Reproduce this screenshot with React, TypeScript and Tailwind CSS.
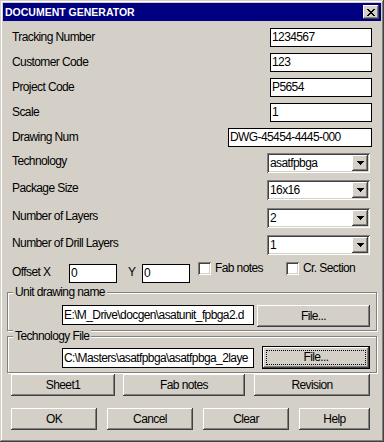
import React from "react";

const RAISED =
  "bg-[#d4d0c8] shadow-[inset_-1px_-1px_0_#404040,inset_1px_1px_0_#ffffff,inset_-2px_-2px_0_#808080,inset_2px_2px_0_#d4d0c8]";
const SUNKEN =
  "shadow-[inset_1px_1px_0_#808080,inset_-1px_-1px_0_#ffffff,inset_2px_2px_0_#404040,inset_-2px_-2px_0_#d4d0c8]";

function Edit({ value, className }: { value: string; className: string }) {
  return (
    <div
      className={`bg-white border border-black flex items-center pl-[1px] overflow-hidden whitespace-nowrap ${className}`}
    >
      {value}
    </div>
  );
}

function Arrow() {
  return (
    <svg width="7" height="4" viewBox="0 0 7 4" shapeRendering="crispEdges">
      <rect x="0" y="0" width="7" height="1" fill="#000" />
      <rect x="1" y="1" width="5" height="1" fill="#000" />
      <rect x="2" y="2" width="3" height="1" fill="#000" />
      <rect x="3" y="3" width="1" height="1" fill="#000" />
    </svg>
  );
}

function CloseGlyph() {
  const rows = [
    [0, 1, 6, 7],
    [1, 2, 5, 6],
    [2, 3, 4, 5],
    [3, 4],
    [2, 3, 4, 5],
    [1, 2, 5, 6],
    [0, 1, 6, 7],
  ];
  return (
    <svg width="8" height="7" viewBox="0 0 8 7" shapeRendering="crispEdges">
      {rows.map((r, y) =>
        r.map((x) => <rect key={`${x}-${y}`} x={x} y={y} width="1" height="1" fill="#000" />)
      )}
    </svg>
  );
}

function Combo({ value }: { value: string }) {
  return (
    <div className={`w-[103px] h-[20px] bg-white p-[2px] flex ${SUNKEN}`}>
      <div className="flex-1 flex items-center pl-[1px] whitespace-nowrap overflow-hidden">{value}</div>
      <div className={`w-[16px] h-[16px] flex items-center justify-center ${RAISED}`}>
        <Arrow />
      </div>
    </div>
  );
}

function Btn({ label, className }: { label: string; className: string }) {
  return (
    <div className={`h-[22px] flex items-center justify-center ${RAISED} ${className}`}>{label}</div>
  );
}

function Check({ label, className }: { label: string; className: string }) {
  return (
    <div className={`flex items-center h-[13px] -mt-[2px] self-start ${className}`}>
      <div className={`w-[13px] h-[13px] bg-white shrink-0 ${SUNKEN}`} />
      <span className="ml-[4px] whitespace-nowrap">{label}</span>
    </div>
  );
}

function EditRow({ label, value, mt, w }: { label: string; value: string; mt: string; w: string }) {
  return (
    <div className={`flex items-center justify-between h-[19px] pl-[9px] pr-[9px] ${mt}`}>
      <span className="whitespace-nowrap">{label}</span>
      <Edit value={value} className={`h-[19px] ${w}`} />
    </div>
  );
}

function ComboRow({ label, value, mt }: { label: string; value: string; mt: string }) {
  return (
    <div className={`flex items-center justify-between h-[20px] pl-[9px] pr-[11px] ${mt}`}>
      <span className="whitespace-nowrap -mt-[4px]">{label}</span>
      <Combo value={value} />
    </div>
  );
}

export default function App() {
  return (
    <div
      className="w-[384px] h-[442px] bg-[#d4d0c8] p-[3px] flex flex-col text-black text-[12px] tracking-[-0.6px] leading-[13px] font-[family-name:'Liberation_Sans',Arial,sans-serif] shadow-[inset_-1px_-1px_0_#404040,inset_1px_1px_0_#d4d0c8,inset_-2px_-2px_0_#808080,inset_2px_2px_0_#ffffff]"
    >
      <div className="h-[18px] bg-[#000080] flex items-center justify-between pl-[2px] pr-[2px] shrink-0">
        <span className="text-white font-bold text-[10.5px] tracking-normal leading-none">
          DOCUMENT GENERATOR
        </span>
        <div className={`w-[16px] h-[14px] flex items-center justify-center ${RAISED}`}>
          <CloseGlyph />
        </div>
      </div>

      <div className="flex flex-col">
        <EditRow label="Tracking Number" value="1234567" mt="mt-[7px]" w="w-[102px]" />
        <EditRow label="Customer Code" value="123" mt="mt-[6px]" w="w-[102px]" />
        <EditRow label="Project Code" value="P5654" mt="mt-[6px]" w="w-[102px]" />
        <EditRow label="Scale" value="1" mt="mt-[6px]" w="w-[102px]" />
        <EditRow label="Drawing Num" value="DWG-45454-4445-000" mt="mt-[6px]" w="w-[144px]" />

        <ComboRow label="Technology" value="asatfpbga" mt="mt-[6px]" />
        <ComboRow label="Package Size" value="16x16" mt="mt-[7px]" />
        <ComboRow label="Number of Layers" value="2" mt="mt-[8px]" />
        <ComboRow label="Number of Drill Layers" value="1" mt="mt-[7px]" />

        <div className="flex items-center h-[19px] mt-[9px] pl-[9px]">
          <span className="w-[57px] whitespace-nowrap -mt-[2px]">Offset X</span>
          <Edit value="0" className="h-[19px] w-[48px]" />
          <span className="w-[14px] ml-[11px] -mt-[2px]">Y</span>
          <Edit value="0" className="h-[19px] w-[48px]" />
          <Check label="Fab notes" className="ml-[8px] w-[88px]" />
          <Check label="Cr. Section" className="" />
        </div>

        <div className="relative ml-[4px] w-[370px] h-[39px] mt-[9px] border border-[#808080] shadow-[1px_1px_0_#ffffff,inset_1px_1px_0_#ffffff] flex items-start pt-[12px] pl-[54px]">
          <span className="absolute left-[5px] -top-[7px] px-[2px] bg-[#d4d0c8] whitespace-nowrap">
            Unit drawing name
          </span>
          <Edit value="E:\M_Drive\docgen\asatunit_fpbga2.d" className="h-[20px] w-[192px]" />
          <Btn label="File..." className="ml-[3px] w-[113px]" />
        </div>

        <div className="relative ml-[4px] w-[370px] h-[37px] mt-[5px] border border-[#808080] shadow-[1px_1px_0_#ffffff,inset_1px_1px_0_#ffffff] flex items-start pt-[9px] pl-[54px]">
          <span className="absolute left-[5px] -top-[7px] px-[2px] bg-[#d4d0c8] whitespace-nowrap">
            Technology File
          </span>
          <Edit value="C:\Masters\asatfpbga\asatfpbga_2laye" className="h-[20px] w-[192px] mt-[2px]" />
          <div className="ml-[8px] w-[108px] h-[23px] border border-black">
            <div className={`w-full h-full p-[3px] ${RAISED}`}>
              <div className="w-full h-full border border-dotted border-black flex items-center justify-center">
                File...
              </div>
            </div>
          </div>
        </div>

        <div className="flex mt-[1px] pl-[8px]">
          <Btn label="Sheet1" className="w-[104px]" />
          <Btn label="Fab notes" className="ml-[8px] w-[122px]" />
          <Btn label="Revision" className="ml-[9px] w-[116px]" />
        </div>

        <div className="flex mt-[12px] pl-[8px]">
          <Btn label="OK" className="w-[86px]" />
          <Btn label="Cancel" className="ml-[10px] w-[86px]" />
          <Btn label="Clear" className="ml-[10px] w-[86px]" />
          <Btn label="Help" className="ml-[10px] w-[71px]" />
        </div>
      </div>
    </div>
  );
}
